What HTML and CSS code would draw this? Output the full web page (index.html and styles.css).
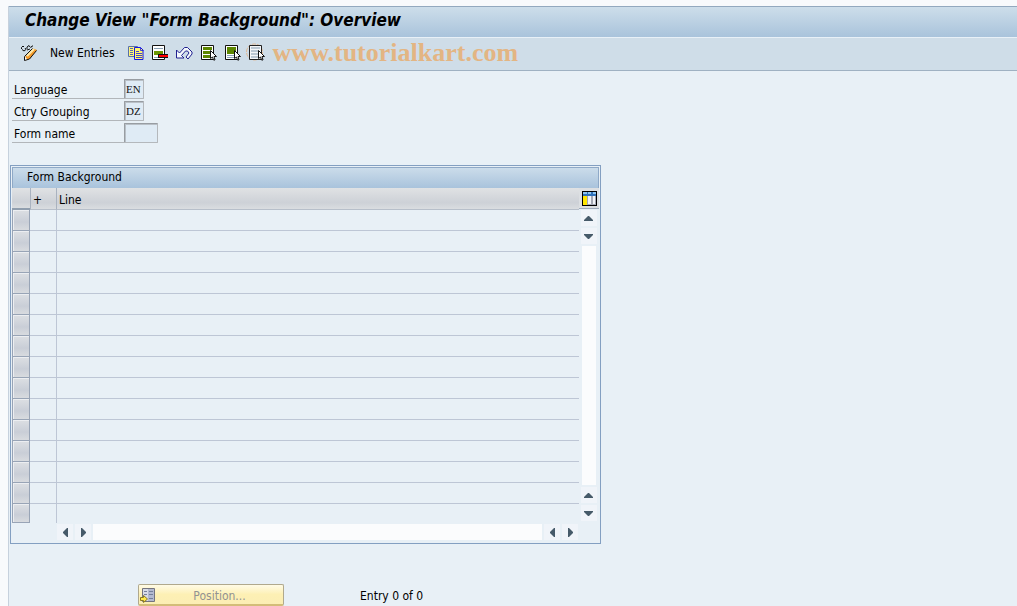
FILE: index.html
```html
<!DOCTYPE html>
<html lang="en">
<head>
<meta charset="utf-8">
<title>Change View "Form Background": Overview</title>
<link rel="stylesheet" href="styles.css">
</head>
<body>
<main class="screen">
  <header class="titlebar"><h1>Change View "Form Background": Overview</h1></header>
  <div class="toolbar" role="toolbar" aria-label="Application toolbar">
    <button class="tool" type="button" aria-label="Display or change">
      <svg width="17" height="16" viewBox="0 0 17 16"><path d="M.5 4V2.500L2 1l1 1M1 4.500l2 1.500 2-1.500L4 3M6 4V2l2-1.500L9 2M6 5l3-1M9.500 3l1.500-2h1" fill="none" stroke="#111"/><path d="M4.500 11.500l8-8 3.500 1.500-7 8.500-4.500 2z" fill="#f59a28"/><path d="M6 11l7-7" stroke="#ffe9a8" stroke-width="2"/><path d="M3.500 11.500l3 3-3 1z" fill="#fff"/><path d="M8.500 14l7-8.500M3.500 15.500v-4l8-8M3.500 15.500l5-1.500" fill="none" stroke="#111"/></svg>
    </button>
    <button class="tool tool-text" type="button">New Entries</button>
    <button class="tool" type="button" aria-label="Copy">
      <svg width="16" height="16" viewBox="0 0 16 16"><path d="M.5 1.500h9v10h-9z" fill="#fff27a" stroke="#5870a8"/><path d="M2 3.500h3M2 5.500h3M2 7.500h3M2 9.500h3" stroke="#5870a8"/><path d="M6.500 2.500h6l2.500 2.500v9.500h-8.500z" fill="#fff56e" stroke="#1414e6"/><path d="M12.500 2.500v3h3M8 6.500h3M8 8.500h6M8 10.500h6M8 12.500h6" fill="none" stroke="#1414e6" stroke-opacity=".8"/></svg>
    </button>
    <button class="tool" type="button" aria-label="Delete">
      <svg width="16" height="16" viewBox="0 0 16 16"><path d="M.5.500h12v14H.5z" fill="#fff" stroke="#111"/><path d="M2 3.500h9M2 12.500h9" stroke="#8ba2b5"/><path d="M2 6h9v4H2z" fill="#6a9600"/><path d="M6 9h10v4H6z" fill="#111"/><path d="M7 10h9v2H7z" fill="#f00"/></svg>
    </button>
    <button class="tool" type="button" aria-label="Undo">
      <svg width="17" height="16" viewBox="0 0 17 16"><path d="M.5 5v8H8L5.500 10.500l4-4.500h2l1.500 2-3 4 2 2 4-5V7l-4.500-4.500H8.500L3.500 8z" fill="#f4f8fc" stroke="#202090"/></svg>
    </button>
    <button class="tool" type="button" aria-label="Select all">
      <svg width="16" height="16" viewBox="0 0 16 16"><path d="M.5.500h12v14H.5z" fill="#fff" stroke="#111"/><path d="M2 2h9v3H2zM2 6h9v3H2zM2 10h9v3H2z" fill="#5d8700"/><path d="M9.500 5.500v8l2-1.500 1 3h1.500l-1-3.500h2.500z" fill="#fff" stroke="#111"/></svg>
    </button>
    <button class="tool" type="button" aria-label="Select block">
      <svg width="16" height="16" viewBox="0 0 16 16"><path d="M.5.500h12v14H.5z" fill="#fff" stroke="#111"/><path d="M2 2h9v7H2z" fill="#5d8700"/><path d="M2 10.500h8M2 12.500h8" stroke="#8ba2b5"/><path d="M9.500 5.500v8l2-1.500 1 3h1.500l-1-3.500h2.500z" fill="#fff" stroke="#111"/></svg>
    </button>
    <button class="tool" type="button" aria-label="Deselect all">
      <svg class="spill" width="16" height="16" viewBox="0 0 16 16"><circle cx="5.500" cy="7" r="8" fill="none" stroke="#e3b992" stroke-dasharray="4 1"/><path d="M.5.500h12v14H.5z" fill="#f4f6f8" stroke="#222"/><path d="M2 3h9M2 6h8M2 9h8M2 12h8" stroke="#8299ad"/><path d="M9.500 5.500v8l2-1.500 1 3h1.500l-1-3.500h2.500z" fill="#fff" stroke="#111"/></svg>
    </button>
    <span class="watermark">www.tutorialkart.com</span>
  </div>

  <div class="content">
    <form class="fields">
      <div class="field"><label for="lang">Language</label><input id="lang" class="box" value="EN" readonly></div>
      <div class="field"><label for="ctry">Ctry Grouping</label><input id="ctry" class="box" value="DZ" readonly></div>
      <div class="field"><label for="fname">Form name</label><input id="fname" class="box box-wide"></div>
    </form>

    <section class="panel">
      <h2>Form Background</h2>
      <div class="grid">
        <table class="rows">
          <thead><tr><th class="sel" aria-label="Select"></th><th class="plus">+</th><th>Line</th></tr></thead>
          <tbody>
            <tr><td class="sel"></td><td></td><td></td></tr>
            <tr><td class="sel"></td><td></td><td></td></tr>
            <tr><td class="sel"></td><td></td><td></td></tr>
            <tr><td class="sel"></td><td></td><td></td></tr>
            <tr><td class="sel"></td><td></td><td></td></tr>
            <tr><td class="sel"></td><td></td><td></td></tr>
            <tr><td class="sel"></td><td></td><td></td></tr>
            <tr><td class="sel"></td><td></td><td></td></tr>
            <tr><td class="sel"></td><td></td><td></td></tr>
            <tr><td class="sel"></td><td></td><td></td></tr>
            <tr><td class="sel"></td><td></td><td></td></tr>
            <tr><td class="sel"></td><td></td><td></td></tr>
            <tr><td class="sel"></td><td></td><td></td></tr>
            <tr><td class="sel"></td><td></td><td></td></tr>
            <tr><td class="sel"></td><td></td><td></td></tr>
          </tbody>
        </table>
        <div class="side">
          <button class="config" type="button" aria-label="Table settings">
            <svg width="15" height="15" viewBox="0 0 15 15"><path d="M0 0h15v15H0z" fill="#000"/><path d="M1 1h13v4H1z" fill="#2f70b8"/><path d="M1 2h4M6 2h3M11 2h3" stroke="#8cc4f0" stroke-width="2"/><path d="M1 5h4v9H1z" fill="#ffe600"/><path d="M5 5h9v9H5z" fill="#a4a8b4"/><path d="M6 5h3v8H6zM11 5h2v8h-2z" fill="#f2f4f8"/></svg>
          </button>
          <div class="vscroll">
            <button class="arrow" type="button" aria-label="Scroll up"><svg width="9" height="5" viewBox="0 0 9 5"><path d="M0 5V4l4-4h1l4 4v1z"/></svg></button>
            <button class="arrow" type="button" aria-label="Line down"><svg width="9" height="5" viewBox="0 0 9 5"><path d="M0 0v1l4 4h1l4-4V0z"/></svg></button>
            <div class="track"></div>
            <button class="arrow" type="button" aria-label="Line up"><svg width="9" height="5" viewBox="0 0 9 5"><path d="M0 5V4l4-4h1l4 4v1z"/></svg></button>
            <button class="arrow" type="button" aria-label="Scroll down"><svg width="9" height="5" viewBox="0 0 9 5"><path d="M0 0v1l4 4h1l4-4V0z"/></svg></button>
          </div>
        </div>
      </div>
      <div class="hscroll">
        <button class="arrow" type="button" aria-label="Scroll left"><svg width="5" height="9" viewBox="0 0 5 9"><path d="M5 0H4L0 4v1l4 4h1z"/></svg></button>
        <button class="arrow" type="button" aria-label="Column right"><svg width="5" height="9" viewBox="0 0 5 9"><path d="M0 0h1l4 4v1L1 9H0z"/></svg></button>
        <div class="track"></div>
        <button class="arrow" type="button" aria-label="Column left"><svg width="5" height="9" viewBox="0 0 5 9"><path d="M5 0H4L0 4v1l4 4h1z"/></svg></button>
        <button class="arrow" type="button" aria-label="Scroll right"><svg width="5" height="9" viewBox="0 0 5 9"><path d="M0 0h1l4 4v1L1 9H0z"/></svg></button>
      </div>
    </section>

    <footer class="footer">
      <button class="position" type="button">
        <svg width="16" height="16" viewBox="0 0 16 16"><path d="M2.500 1.500h12v13h-12z" fill="#d8dbe6" stroke="#74747e"/><path d="M8 2h6v12H8z" fill="#b3b9d0"/><path d="M4 4.500h3M4 7.500h3M9 4.500h4M9 7.500h4M9 11.500h4" stroke="#74809a"/><path d="M.5 10.500h3v-2l4 3.500-4 3.500v-2h-3z" fill="#ffe94a" stroke="#8a7a20"/></svg>
        <span>Position...</span>
      </button>
      <span class="entry">Entry 0 of 0</span>
    </footer>
  </div>
</main>
</body>
</html>
```
FILE: styles.css
```css
* { box-sizing: border-box; }
html { background: #f8fafc; }
body {
  margin: 0;
  padding: 6px 0 0 8px;
  color: #000;
  font: 12px/16px "DejaVu Sans Condensed", "Noto Sans", sans-serif;
  overflow: hidden;
}
button { margin: 0; padding: 0; border: 0; background: none; font: inherit; color: inherit; }
svg { display: block; flex: none; }

.screen {
  min-height: calc(100vh - 6px);
  background: #e8f0f6;
  border-left: 1px solid #c6d1dd;
}
.titlebar {
  height: 31px;
  padding-left: 16px;
  border-top: 1px solid #93a9bf;
  background: linear-gradient(#cddeea, #a9c3db);
}
h1 { margin: 0; font-size: 17px; line-height: 26px; font-weight: bold; font-style: italic; white-space: nowrap; }
.toolbar {
  display: flex;
  align-items: center;
  gap: 8px;
  height: 34px;
  padding: 0 0 2px 12px;
  background: #cfdde8;
  border-top: 1px solid #e8f0f7;
  border-bottom: 1px solid #9fb1c2;
}
.tool { flex: none; white-space: nowrap; }
.tool-text { margin: 0 5px 0 4px; }
.spill { overflow: visible; }
.watermark {
  font: bold 26px/28px "Liberation Serif", serif;
  color: #e3b583;
}

.content { padding: 8px 0 0 1px; }
.fields { display: grid; gap: 2px; }
.field { display: flex; height: 20px; padding-left: 2px; }
.field label { width: 112px; padding: 3px 0 0 2px; border-bottom: 1px solid #b2b6ba; }
.box {
  width: 20px;
  height: 20px;
  padding: 0 0 0 1px;
  border: 1px solid #b4b8bc;
  border-top-color: #989da2;
  border-left-color: #989da2;
  border-radius: 1px;
  box-shadow: inset 1px 1px #b9c0c7;
  background: #dfebf5;
  font: 11px/18px "Liberation Serif", serif;
  color: #111;
}
.box-wide { width: 34px; }

.panel {
  width: 591px;
  max-width: 100%;
  margin-top: 22px;
  padding: 1px 1px 3px;
  border: 1px solid #839fc1;
}
h2 {
  height: 21px;
  margin: 0;
  padding-left: 14px;
  border: 1px solid #8fa9c7;
  border-bottom: 0;
  background: linear-gradient(#cbdcea, #a9c3dc);
  font-size: 12px;
  line-height: 18px;
  font-weight: normal;
}
.grid { display: flex; }
.rows { flex: 1; border-collapse: separate; border-spacing: 0; table-layout: fixed; }
.rows th {
  height: 22px;
  padding: 2px 0 0 2px;
  text-align: left;
  font-weight: normal;
  border-bottom: 1px solid #b7bfca;
  border-left: 1px solid #a9b2bf;
  background: linear-gradient(#e0e2e4, #cdd1d7 70%, #dadde0);
}
.rows td { height: 21px; padding: 0; border-bottom: 1px solid #bdc6d5; border-left: 1px solid #bdc6d5; }
.rows td:nth-child(2) { border-left: 0; }
.rows tr:last-child td { height: 19px; border-bottom: 0; }
.rows .plus { width: 26px; }
.rows .sel { width: 18px; border-left: 0; }
.rows th.sel { border-bottom: 2px solid #909eae; }
.rows td.sel, .rows tr:last-child td.sel {
  border: 1px solid #98a4b6;
  border-top: 0;
  box-shadow: inset 1px 1px #eceef1;
  background: linear-gradient(#dcdfe3, #c9ced7 60%, #d8dbdf);
}
.side { display: flex; flex-direction: column; width: 20px; }
.config {
  display: flex;
  align-items: center;
  justify-content: center;
  height: 21px;
  background: #dcdfe2;
  border-bottom: 1px solid #9eabbc;
}
.vscroll { flex: 1; display: flex; flex-direction: column; align-items: center; gap: 2px; padding: 1px 1px 2px 0; }
.arrow {
  display: grid;
  place-items: center;
  flex: none;
  width: 16px;
  height: 16px;
  background: #f0f4f9;
}
.arrow path { fill: #465a69; }
.track { flex: 1; background: #fbfcfd; }
.vscroll .track { width: 14px; }
.hscroll { display: flex; gap: 2px; padding: 1px 21px 0 45px; }

.footer { display: flex; align-items: center; gap: 76px; margin-top: 40px; padding-left: 128px; }
.entry { padding-top: 2px; }
.position {
  display: flex;
  align-items: center;
  width: 146px;
  height: 22px;
  padding-left: 1px;
  border: 1px solid #b0a98d;
  border-bottom: 2px solid #d3bd78;
  border-radius: 2px;
  background: linear-gradient(#fffbe6, #fdf0b4 50%, #fbeeb4);
  color: #929292;
}
.position span { flex: 1; padding-top: 2px; text-align: center; }
```
